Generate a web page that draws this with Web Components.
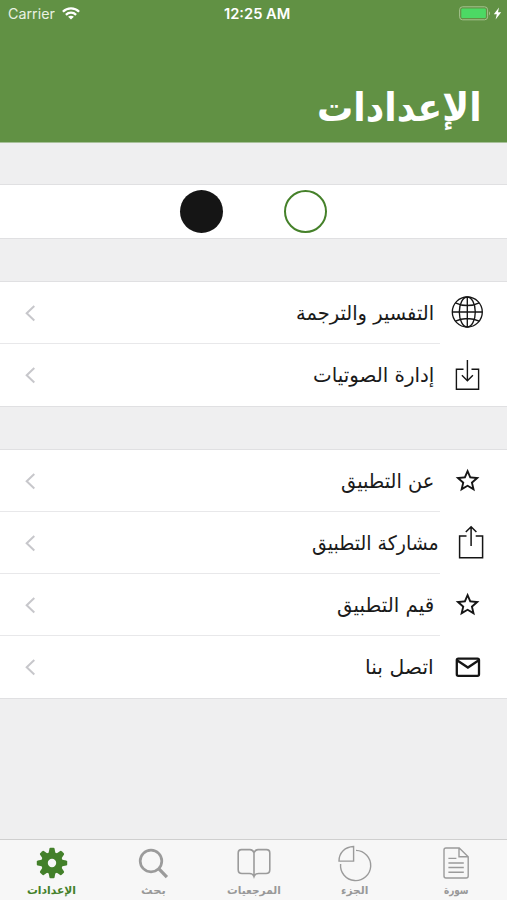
<!DOCTYPE html>
<html lang="ar">
<head>
<meta charset="utf-8">
<title>الإعدادات</title>
<style>
  body {
    margin: 0;
    background: #efeff0;
    font-family: "DejaVu Sans", "Noto Sans", sans-serif;
  }
</style>
</head>
<body>
<settings-page></settings-page>

<script>
// One line of text, stretched or squeezed to the width given in pixels
class FitText extends HTMLElement {
  constructor() {
    super();
    this.attachShadow({ mode: 'open' });
    this.shadowRoot.innerHTML = `
      <style>
        :host {
          display: block;
          flex: none;
          white-space: nowrap;
        }
        span {
          display: inline-block;
          transform-origin: 0 50%;
        }
        :host([dir="rtl"]) span {
          transform-origin: 100% 50%;
        }
      </style>
      <span><slot></slot></span>
    `;
  }

  connectedCallback() {
    const width = Number(this.getAttribute('width'));
    const span = this.shadowRoot.querySelector('span');
    this.style.width = width + 'px';
    requestAnimationFrame(() => {
      span.style.transform = `scaleX(${width / span.offsetWidth})`;
    });
  }
}

class StatusBar extends HTMLElement {
  constructor() {
    super();
    this.attachShadow({ mode: 'open' });
    this.shadowRoot.innerHTML = `
      <style>
        :host {
          display: grid;
          grid-template-columns: 1fr auto 1fr;
          align-items: center;
          height: 27px;
          padding: 0 5px 0 8px;
          color: #fff;
          font-family: Inter, "Liberation Sans", sans-serif;
          font-size: 14px;
        }
        div {
          display: flex;
          align-items: center;
        }
        .carrier {
          gap: 7px;
          color: #e9f2e3;
        }
        .time {
          padding-left: 3px;
          font-weight: 600;
        }
        .power {
          justify-content: flex-end;
          gap: 2px;
        }
        svg {
          display: block;
        }
      </style>
      <div class="carrier">
        <fit-text width="47">Carrier</fit-text>
        <svg width="18" height="13" viewBox="0 0 18 13" fill="none" stroke="#fff" stroke-width="2.3">
          <path d="M.9 4.7C5.4.2 12.6.2 17.1 4.7"/>
          <path d="M3.9 7.8c2.9-2.8 7.3-2.8 10.2 0"/>
          <path d="M9 12.6 6.1 9.8c1.7-1.5 4.1-1.5 5.8 0z" fill="#fff" stroke="none"/>
        </svg>
      </div>
      <div class="time"><fit-text width="66">12:25 AM</fit-text></div>
      <div class="power">
        <svg width="32" height="15" viewBox="0 0 32 15">
          <rect x=".6" y=".8" width="28" height="13" rx="3" fill="none" stroke="#a5c28f"/>
          <rect x="2.3" y="2.5" width="24.6" height="9.6" rx="1.2" fill="#4cd964"/>
          <path d="M30 5.2q2 2.1 0 4.2z" fill="#a5c28f"/>
        </svg>
        <svg width="9" height="13" viewBox="0 0 9 13"><path d="M6 .6.8 7.2h3L2.6 12.4 8.2 5.3H5z" fill="#fff"/></svg>
      </div>
    `;
  }
}

class PageHeader extends HTMLElement {
  constructor() {
    super();
    this.attachShadow({ mode: 'open' });
    this.shadowRoot.innerHTML = `
      <style>
        :host {
          display: flex;
          flex-direction: column;
          justify-content: space-between;
          height: 143px;
          box-sizing: border-box;
          background: #619144;
          border-bottom: 1px solid #a8c19a;
        }
        h1 {
          display: flex;
          justify-content: flex-end;
          margin: 0;
          padding: 0 25px 10px 0;
          color: #fff;
          font-size: 39px;
          line-height: 48px;
          font-weight: bold;
        }
      </style>
      <status-bar></status-bar>
      <h1><slot></slot></h1>
    `;
  }
}

class SettingsGroup extends HTMLElement {
  constructor() {
    super();
    this.attachShadow({ mode: 'open' });
    this.shadowRoot.innerHTML = `
      <style>
        :host {
          display: block;
          margin-top: 42px;
          background: #fff;
          border-top: 1px solid #e0e0e2;
          border-bottom: 1px solid #e0e0e2;
        }
        /* the header's own hairline takes one pixel of the first gap */
        :host(:first-of-type) {
          margin-top: 41px;
        }
      </style>
      <slot></slot>
    `;
  }
}

class ThemePicker extends HTMLElement {
  constructor() {
    super();
    this.attachShadow({ mode: 'open' });
    this.shadowRoot.innerHTML = `
      <style>
        :host {
          display: flex;
          justify-content: center;
          align-items: center;
          gap: 61px;
          height: 53px;
        }
        span {
          width: 43px;
          height: 43px;
          border-radius: 50%;
          box-sizing: border-box;
        }
        .dark {
          background: #151515;
        }
        .light {
          border: 2.5px solid #45812a;
        }
      </style>
      <span class="dark"></span>
      <span class="light"></span>
    `;
  }
}

const ROW_ICONS = {
  globe: `<g stroke-width="1.35">
      <circle cx="27.3" cy="30" r="15"/>
      <ellipse cx="27.3" cy="30" rx="8" ry="15"/>
      <path d="M27.3 15v30M12.3 30h30M15.4 20.8c7 3.6 16.8 3.6 23.8 0M15.4 39.2c7-3.6 16.8-3.6 23.8 0"/>
    </g>`,
  download: `<path stroke-width="1.4" d="M23.5 25.2h-7.1v20.1h22.2V25.2h-7.1M27.4 16v20.5M21.9 31.2l5.5 5.5 5.5-5.5"/>`,
  star: `<path transform="translate(13.3 16.3) scale(1.19)" fill="#151515" stroke="none" d="M22 9.24l-7.19-.62L12 2 9.19 8.63 2 9.24l5.46 4.73L5.82 21 12 17.27 18.18 21l-1.63-7.03L22 9.24zM12 15.4l-3.76 2.27 1-4.28-3.32-2.88 4.38-.38L12 6.1l1.71 4.04 4.38.38-3.32 2.88 1 4.28L12 15.4z"/>`,
  share: `<path stroke-width="1.5" d="M26.5 24h-6.9v21.8h23V24h-6.9M31.1 34V14.6M25.8 20l5.3-5.3 5.3 5.3"/>`,
  mail: `<g stroke-width="2.3"><rect x="16.8" y="22.6" width="22.2" height="17.2" rx="1.5"/><path d="M17 24.3l10.9 7.2 10.9-7.2"/></g>`
};

class SettingsRow extends HTMLElement {
  constructor() {
    super();
    this.attachShadow({ mode: 'open' });
  }

  connectedCallback() {
    const icon = this.getAttribute('icon');
    this.shadowRoot.innerHTML = `
      <style>
        :host {
          display: flex;
          height: 62.25px;
          color: #1a1a1a;
          font-size: 20px;
        }
        .content {
          flex: 1;
          display: flex;
          justify-content: space-between;
          align-items: center;
          padding: 1px 6px 0 25px;
          border-bottom: 1px solid #e8e8ea;
          box-sizing: border-box;
        }
        /* no separator under the last row of a group */
        :host(:last-of-type) {
          height: 61.25px;
        }
        :host(:last-of-type) .content {
          border-bottom: 0;
        }
        :host([icon="share"]) .content {
          padding-right: 1px;
        }
        svg {
          display: block;
          flex: none;
        }
      </style>
      <div class="content">
        <svg width="11" height="18" viewBox="0 0 11 18" fill="none" stroke="#c7c7cb" stroke-width="2">
          <path d="M9.3 2 1.7 9.2l7.6 7.2"/>
        </svg>
        <slot></slot>
      </div>
      <svg width="67" height="61" viewBox="0 0 67 61" fill="none" stroke="#151515">${ROW_ICONS[icon]}</svg>
    `;
  }
}

function gear() {
  // eight flared teeth round a ring
  let teeth = '';
  for (let a = 0; a < 360; a += 45) {
    teeth += `<path transform="rotate(${a} 20 20)" d="M16.4 11l1-5.2q.2-1 1.1-1h3q.9 0 1.1 1l1 5.2z"/>`;
  }
  return `<g fill="#43802a" stroke="none">${teeth}</g><circle cx="20" cy="20" r="7.5" stroke="#43802a" stroke-width="6.6"/>`;
}

const TAB_ICONS = {
  page: `<g stroke-width="1.4"><path d="M10 5h13.2l9 8.7V33q0 2-2 2H10q-2 0-2-2V7q0-2 2-2zM23 5.4v8.4h9"/>
      <path d="M12.4 15.4h8M12.4 20h15.4M12.4 24.5h15.4M12.4 29.2h15.4"/></g>`,
  pie: `<g stroke-width="1.4"><path d="M18.6 3.5v14.6H4C4 9.5 10.1 3.9 18.6 3.5z"/><path d="M21 7.4A15.1 15.1 0 1 1 5.6 21"/></g>`,
  book: `<path stroke-width="1.6" d="M20 9.8c-.7-2-2-3.2-4-3.2H7.5q-3.3 0-3.3 3.3v16.8q0 3.8 3.8 3.8h7.5q3.5 0 4.5 3 1-3 4.5-3H32q3.8 0 3.8-3.8V9.9q0-3.3-3.3-3.3H24c-2 0-3.3 1.2-4 3.2zm0 0v23"/>`,
  search: `<g stroke-width="2.7"><circle cx="18" cy="18" r="10.8"/><path d="M25.7 25.7l8.2 8.5" stroke-width="3.3"/></g>`,
  gear: gear()
};

class TabItem extends HTMLElement {
  constructor() {
    super();
    this.attachShadow({ mode: 'open' });
  }

  connectedCallback() {
    const icon = this.getAttribute('icon');
    this.shadowRoot.innerHTML = `
      <style>
        :host {
          flex: 1;
          display: flex;
          flex-direction: column;
          align-items: center;
          padding-top: 3px;
          color: #999;
          font-size: 11px;
          line-height: 16px;
          font-weight: bold;
        }
        :host([selected]) {
          padding-left: 1px;
          color: #43802a;
        }
        svg {
          display: block;
          flex: none;
        }
      </style>
      <svg width="40" height="40" viewBox="0 0 40 40" fill="none" stroke="#9b9b9b">${TAB_ICONS[icon]}</svg>
      <slot></slot>
    `;
  }
}

class TabBar extends HTMLElement {
  constructor() {
    super();
    this.attachShadow({ mode: 'open' });
    this.shadowRoot.innerHTML = `
      <style>
        :host {
          display: flex;
          flex: none;
          height: 61px;
          box-sizing: border-box;
          margin-top: auto;
          background: #f7f7f7;
          border-top: 1px solid #cfcfcf;
          overflow: hidden;
        }
      </style>
      <slot></slot>
    `;
  }
}

class SettingsPage extends HTMLElement {
  constructor() {
    super();
    this.attachShadow({ mode: 'open' });
    this.shadowRoot.innerHTML = `
      <style>
        :host {
          display: flex;
          flex-direction: column;
          height: 900px;
          overflow: hidden;
        }
      </style>
      <page-header><fit-text dir="rtl" width="165">الإعدادات</fit-text></page-header>

      <settings-group>
        <theme-picker></theme-picker>
      </settings-group>

      <settings-group>
        <settings-row icon="globe"><fit-text dir="rtl" width="138">التفسير والترجمة</fit-text></settings-row>
        <settings-row icon="download"><fit-text dir="rtl" width="121">إدارة الصوتيات</fit-text></settings-row>
      </settings-group>

      <settings-group>
        <settings-row icon="star"><fit-text dir="rtl" width="93">عن التطبيق</fit-text></settings-row>
        <settings-row icon="share"><fit-text dir="rtl" width="127">مشاركة التطبيق</fit-text></settings-row>
        <settings-row icon="star"><fit-text dir="rtl" width="97">قيم التطبيق</fit-text></settings-row>
        <settings-row icon="mail"><fit-text dir="rtl" width="69">اتصل بنا</fit-text></settings-row>
      </settings-group>

      <tab-bar>
        <tab-item icon="gear" selected><fit-text dir="rtl" width="49">الإعدادات</fit-text></tab-item>
        <tab-item icon="search"><fit-text dir="rtl" width="25">بحث</fit-text></tab-item>
        <tab-item icon="book"><fit-text dir="rtl" width="54">المرجعيات</fit-text></tab-item>
        <tab-item icon="pie"><fit-text dir="rtl" width="27">الجزء</fit-text></tab-item>
        <tab-item icon="page"><fit-text dir="rtl" width="25">سورة</fit-text></tab-item>
      </tab-bar>
    `;
  }
}

customElements.define('fit-text', FitText);
customElements.define('status-bar', StatusBar);
customElements.define('page-header', PageHeader);
customElements.define('settings-group', SettingsGroup);
customElements.define('theme-picker', ThemePicker);
customElements.define('settings-row', SettingsRow);
customElements.define('tab-item', TabItem);
customElements.define('tab-bar', TabBar);
customElements.define('settings-page', SettingsPage);
</script>
</body>
</html>
